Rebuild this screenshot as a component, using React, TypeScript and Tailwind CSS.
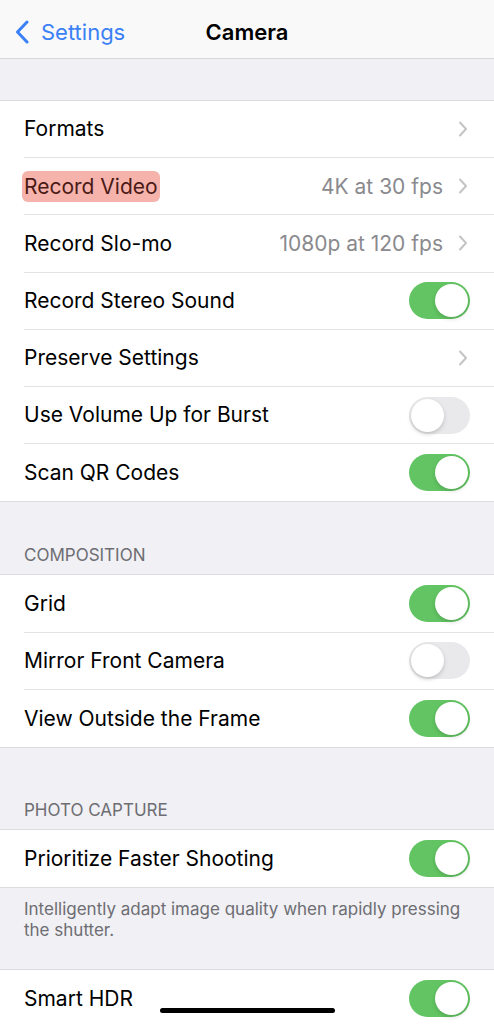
import React from "react";

const font = { fontFamily: "Inter, 'Noto Sans', sans-serif" };

function Chevron() {
  return (
    <svg width="10" height="16" viewBox="0 0 10 16" className="shrink-0">
      <path d="M2 1.5 L8 8 L2 14.5" fill="none" stroke="#c4c4c7" strokeWidth="2" strokeLinecap="round" strokeLinejoin="round" />
    </svg>
  );
}

function Toggle({ on }: { on: boolean }) {
  return on ? (
    <div className="w-[61px] h-[37px] rounded-full bg-[#62c462] flex items-center justify-end px-[2px] shrink-0">
      <div className="w-[33px] h-[33px] rounded-full bg-white shadow-[0_2px_4px_rgba(0,0,0,0.15)]" />
    </div>
  ) : (
    <div className="w-[61px] h-[37px] rounded-full bg-[#e9e9eb] flex items-center justify-start px-[2px] shrink-0">
      <div className="w-[33px] h-[33px] rounded-full bg-white shadow-[0_2px_4px_rgba(0,0,0,0.18)]" />
    </div>
  );
}

type Row = { label: React.ReactNode; value?: string; chevron?: boolean; toggle?: boolean };

function Group({ rows }: { rows: Row[] }) {
  return (
    <div className="bg-white border-y border-[#dcdce0]">
      {rows.map((r, i) => (
        <div key={i} className="pl-[24px]">
          <div
            className={
              "h-[57.2px] flex items-center pr-[24px] " +
              (i < rows.length - 1 ? "border-b border-[#e3e3e6]" : "")
            }
          >
            <div className="flex-1 text-[21px] text-black">{r.label}</div>
            {r.value && <div className="text-[21px] text-[#8a8a8e] mr-[15px]">{r.value}</div>}
            {r.chevron && <div className="mr-[2px] flex"><Chevron /></div>}
            {r.toggle !== undefined && <Toggle on={r.toggle} />}
          </div>
        </div>
      ))}
    </div>
  );
}

export default function App() {
  return (
    <div className="w-[494px] h-[1024px] overflow-hidden bg-[#f0f0f5] relative" style={font}>
      <div className="h-[59px] bg-[#f9f9f9] border-b border-[#d7d7da] relative flex items-center pt-[6px]">
        <div className="flex items-center pl-[15px] text-[#3a80f6]">
          <svg width="14" height="24" viewBox="0 0 14 24">
            <path d="M12 2 L2.5 12 L12 22" fill="none" stroke="#3a80f6" strokeWidth="3" strokeLinecap="round" strokeLinejoin="round" />
          </svg>
          <span className="ml-[12px] text-[22px]">Settings</span>
        </div>
        <div className="absolute left-0 right-0 text-center text-[22px] font-semibold text-black pointer-events-none">
          Camera
        </div>
      </div>
      <div className="h-[41px]" />
      <Group
        rows={[
          { label: "Formats", chevron: true },
          {
            label: (
              <span className="bg-[#f6b3ac] text-[#4a1a16] rounded-[6px] px-[2px] -mx-[2px] py-[3px]">Record Video</span>
            ),
            value: "4K at 30 fps",
            chevron: true,
          },
          { label: "Record Slo-mo", value: "1080p at 120 fps", chevron: true },
          { label: "Record Stereo Sound", toggle: true },
          { label: "Preserve Settings", chevron: true },
          { label: "Use Volume Up for Burst", toggle: false },
          { label: "Scan QR Codes", toggle: true },
        ]}
      />
      <div className="px-[24px] pt-[43px] pb-[9px] text-[17px] text-[#6d6d72] leading-[20px]">COMPOSITION</div>
      <Group
        rows={[
          { label: "Grid", toggle: true },
          { label: "Mirror Front Camera", toggle: false },
          { label: "View Outside the Frame", toggle: true },
        ]}
      />
      <div className="px-[24px] pt-[52px] pb-[9px] text-[17px] text-[#6d6d72] leading-[20px]">PHOTO CAPTURE</div>
      <Group rows={[{ label: "Prioritize Faster Shooting", toggle: true }]} />
      <div className="pl-[24px] pr-[20px] pt-[11px] pb-[28px] text-[17px] leading-[21px] text-[#6d6d72]">
        Intelligently adapt image quality when rapidly pressing the shutter.
      </div>
      <Group rows={[{ label: "Smart HDR", toggle: true }]} />
      <div className="absolute left-[160px] top-[1008px] w-[175px] h-[5px] rounded-full bg-black" />
    </div>
  );
}
